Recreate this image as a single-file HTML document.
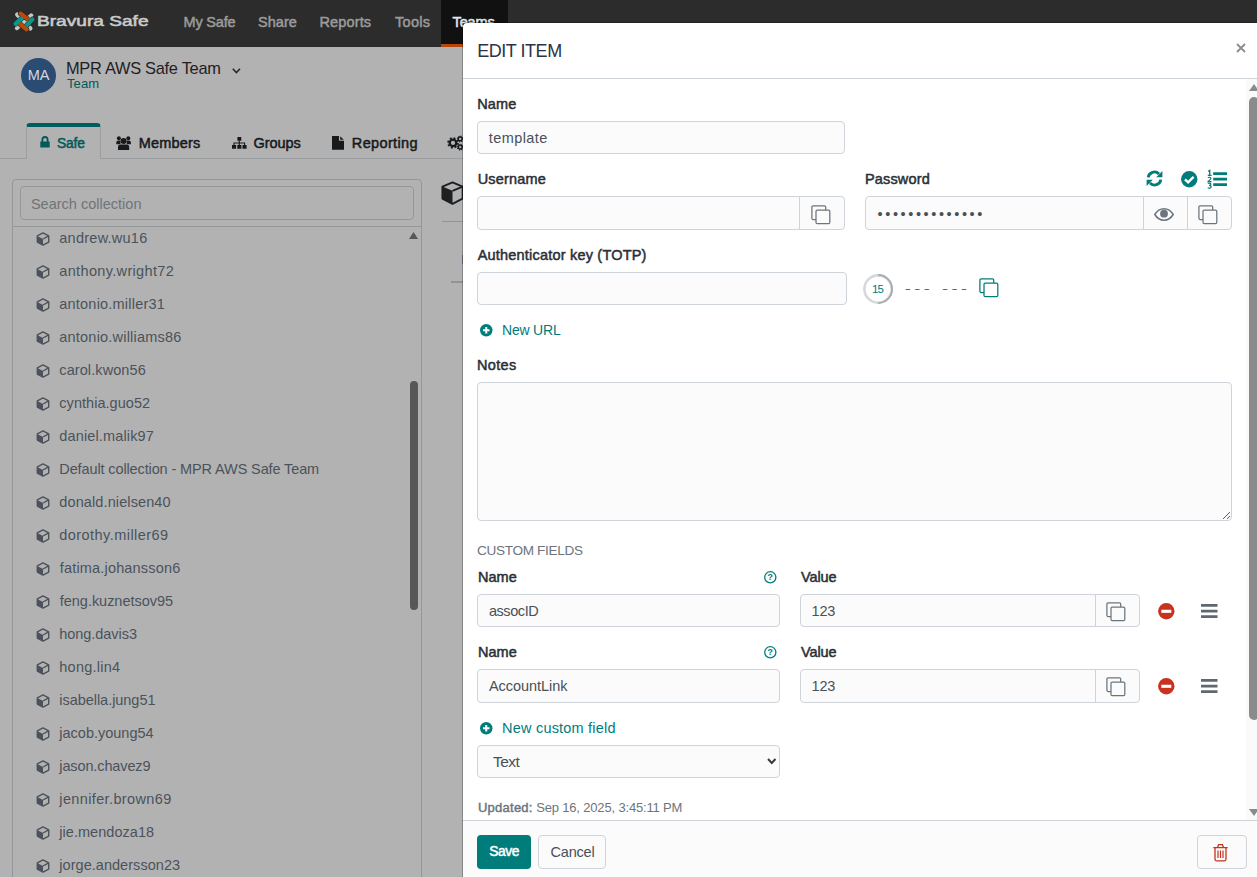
<!DOCTYPE html>
<html lang="en">
<head>
<meta charset="utf-8">
<title>Bravura Safe - Edit Item</title>
<style>
*{box-sizing:border-box;margin:0;padding:0}
html,body{width:1257px;height:877px;overflow:hidden;background:#b2b2b2}
body{position:relative;font-family:"Liberation Sans",sans-serif;font-size:14.5px;color:#171a1d}
.abs{position:absolute}
.t{position:absolute;white-space:nowrap;line-height:1}
svg{display:block;position:absolute;overflow:visible}

/* ---------- dimmed page underneath ---------- */
#nav{position:absolute;left:0;top:0;width:1257px;height:47px;background:#2c2c2c}
#nav .active{position:absolute;left:441px;top:0;width:67px;height:47px;background:#111;border-bottom:3px solid #b6470a}
#nav .lnk{font-weight:normal;-webkit-text-stroke:0.5px currentColor;font-size:14.5px;color:#9b9b9b;top:15px}
#nav .brand{font-weight:normal;-webkit-text-stroke:0.55px currentColor;color:#cacaca;font-size:13.8px;left:37.5px;top:15.300px;transform-origin:0 50%;transform:scaleX(1.385)}

#avatar{left:21px;top:58px;width:35px;height:35px;border-radius:50%;background:#2a4b72;color:#d4d9e0;font-size:14.5px;text-align:center;line-height:35.5px}
#teamname{left:67px;top:60px;font-size:16.4px;color:#231d22}
#teamsub{left:67px;top:77.300px;font-size:13px;color:#00595a}

#tabline{left:0;top:158px;width:463px;height:1px;background:#9a9da0}
#tabsafe{left:26px;top:123px;width:75px;height:36px;border:1px solid #9a9da0;border-bottom:none;border-top:4px solid #005f5e;border-radius:4px 4px 0 0;background:#b2b2b2}
.tab{font-weight:normal;-webkit-text-stroke:0.5px currentColor;font-size:14.5px;color:#171a1d;top:136px}

#coll{left:12px;top:179px;width:410px;height:720px;border:1px solid #94979a;border-radius:4px 4px 0 0}
#collhead{left:12px;top:226px;width:410px;height:1px;background:#94979a}
#search{left:20px;top:186px;width:394px;height:34px;border:1px solid #94979a;border-radius:4px}
#searchph{left:31.5px;top:197px;color:#6f7479;font-size:14.5px}
.row{left:59.5px;color:#4b525b;font-size:14.5px}
.cube{left:35.500px;margin-top:0.600px;width:14px;height:14px;color:#4b525b}
#sthumb{left:409.700px;top:381px;width:8px;height:229px;border-radius:4px;background:#575757}

/* ---------- modal ---------- */
#modal{left:462px;top:22px;width:801px;height:900px;background:#fff;border:1px solid rgba(0,0,0,.25);background-clip:padding-box;border-radius:5px 0 0 0;overflow:hidden}

#mhead-line{left:463px;top:78px;width:800px;height:1px;background:#ced4da}
#mtitle{left:477.5px;top:42px;font-size:18px;color:#2b3345}
#mclose{left:1236px;top:43px;width:10px;height:10px;color:#8c8c8c}
#mfoot{left:463px;top:820px;width:800px;height:60px;background:#fbfbfb;border-top:1px solid #ced4da}
#strack{left:1246px;top:79px;width:16px;height:741px;background:#fafafa}
#sthumb2{left:1249px;top:97px;width:10px;height:623px;border-radius:5px;background:#8b8b8b}
.lbl{font-weight:normal;-webkit-text-stroke:0.5px currentColor;font-size:14.5px;color:#2b2f36;line-height:21px}
.inp{position:absolute;background:#fbfbfb;border:1px solid #ced4da;border-radius:4px}
.inp .div{position:absolute;top:0;bottom:0;width:1px;background:#ced4da}
.val{font-size:14.5px;color:#495057;line-height:21px}
.lnk2{font-size:14.5px;color:#007c7b;line-height:21px}
.ic{color:#5c656e}
.teal{color:#007c7b}
#save{left:477px;top:835px;width:54px;height:34px;border-radius:4px;background:#007c7b}
#savet{left:488px;top:845.200px;font-weight:normal;-webkit-text-stroke:0.5px currentColor;font-size:13.800px;color:#fff}
#cancel{left:538px;top:835px;width:68px;height:34px;border-radius:4px;background:#fbfbfb;border:1px solid #ced4da}
#cancelt{left:550px;top:844.8px;font-size:14.5px;color:#49505a}
#trash{left:1197px;top:835px;width:50px;height:34px;border-radius:4px;background:#fbfbfb;border:1px solid #ced4da}
</style>
</head>
<body>

<div id="nav">
  <div class="active"></div>
  <span class="t brand" id="brand" style="left:36.8px">Bravura Safe</span>
  <span class="t lnk" id="n1" style="left:183.5px;letter-spacing:-0.17px">My Safe</span>
  <span class="t lnk" id="n2" style="left:258.0px;letter-spacing:0.05px">Share</span>
  <span class="t lnk" id="n3" style="left:319.5px;letter-spacing:0.13px">Reports</span>
  <span class="t lnk" id="n4" style="left:395.1px;letter-spacing:0.24px">Tools</span>
  <span class="t lnk" id="n5" style="left:452.5px;color:#e2e6e9;letter-spacing:-0.100px">Teams</span>
</div>

<div class="abs" id="avatar">MA</div>
<span class="t" id="teamname" style="letter-spacing:-0.28px;left:66.0px">MPR AWS Safe Team</span>
<span class="t" id="teamsub" style="letter-spacing:0.10px;left:67.0px">Team</span>

<div class="abs" id="tabline"></div>
<div class="abs" id="tabsafe"></div>
<span class="t tab" id="t1" style="top:136.600px;font-size:13.800px;left:57.0px;color:#005a5a;letter-spacing:-0.17px">Safe</span>
<span class="t tab" id="t2" style="left:138.7px;letter-spacing:0.20px">Members</span>
<span class="t tab" id="t3" style="left:253.5px;letter-spacing:-0.04px">Groups</span>
<span class="t tab" id="t4" style="left:351.8px;letter-spacing:0.36px">Reporting</span>

<div class="abs" id="coll"></div>
<div class="abs" id="collhead"></div>
<div class="abs" id="search"></div>
<span class="t" id="searchph" style="letter-spacing:0.01px;left:30.9px">Search collection</span>
<div id="rows">
<svg class="cube" style="top:231px" viewBox="0 0 14 14"><path d="M7 .9 12.7 3.9V10.1L7 13.1 1.3 10.1V3.9Z" fill="none" stroke="currentColor" stroke-width="1.4" stroke-linejoin="round"/><path d="M1.3 3.9 7 7V13.1L1.3 10.1Z" fill="currentColor"/><path d="M7 7 12.7 3.9" fill="none" stroke="currentColor" stroke-width="1.4"/></svg><span class="t row" id="r0" style="top:231px;letter-spacing:0.25px;left:59.3px">andrew.wu16</span>
<svg class="cube" style="top:264px" viewBox="0 0 14 14"><path d="M7 .9 12.7 3.9V10.1L7 13.1 1.3 10.1V3.9Z" fill="none" stroke="currentColor" stroke-width="1.4" stroke-linejoin="round"/><path d="M1.3 3.9 7 7V13.1L1.3 10.1Z" fill="currentColor"/><path d="M7 7 12.7 3.9" fill="none" stroke="currentColor" stroke-width="1.4"/></svg><span class="t row" id="r1" style="top:264px;letter-spacing:0.34px;left:59.3px">anthony.wright72</span>
<svg class="cube" style="top:297px" viewBox="0 0 14 14"><path d="M7 .9 12.7 3.9V10.1L7 13.1 1.3 10.1V3.9Z" fill="none" stroke="currentColor" stroke-width="1.4" stroke-linejoin="round"/><path d="M1.3 3.9 7 7V13.1L1.3 10.1Z" fill="currentColor"/><path d="M7 7 12.7 3.9" fill="none" stroke="currentColor" stroke-width="1.4"/></svg><span class="t row" id="r2" style="top:297px;letter-spacing:0.21px;left:59.3px">antonio.miller31</span>
<svg class="cube" style="top:330px" viewBox="0 0 14 14"><path d="M7 .9 12.7 3.9V10.1L7 13.1 1.3 10.1V3.9Z" fill="none" stroke="currentColor" stroke-width="1.4" stroke-linejoin="round"/><path d="M1.3 3.9 7 7V13.1L1.3 10.1Z" fill="currentColor"/><path d="M7 7 12.7 3.9" fill="none" stroke="currentColor" stroke-width="1.4"/></svg><span class="t row" id="r3" style="top:330px;letter-spacing:0.21px;left:59.3px">antonio.williams86</span>
<svg class="cube" style="top:363px" viewBox="0 0 14 14"><path d="M7 .9 12.7 3.9V10.1L7 13.1 1.3 10.1V3.9Z" fill="none" stroke="currentColor" stroke-width="1.4" stroke-linejoin="round"/><path d="M1.3 3.9 7 7V13.1L1.3 10.1Z" fill="currentColor"/><path d="M7 7 12.7 3.9" fill="none" stroke="currentColor" stroke-width="1.4"/></svg><span class="t row" id="r4" style="top:363px;letter-spacing:0.09px;left:59.3px">carol.kwon56</span>
<svg class="cube" style="top:396px" viewBox="0 0 14 14"><path d="M7 .9 12.7 3.9V10.1L7 13.1 1.3 10.1V3.9Z" fill="none" stroke="currentColor" stroke-width="1.4" stroke-linejoin="round"/><path d="M1.3 3.9 7 7V13.1L1.3 10.1Z" fill="currentColor"/><path d="M7 7 12.7 3.9" fill="none" stroke="currentColor" stroke-width="1.4"/></svg><span class="t row" id="r5" style="top:396px;letter-spacing:0.04px;left:59.3px">cynthia.guo52</span>
<svg class="cube" style="top:429px" viewBox="0 0 14 14"><path d="M7 .9 12.7 3.9V10.1L7 13.1 1.3 10.1V3.9Z" fill="none" stroke="currentColor" stroke-width="1.4" stroke-linejoin="round"/><path d="M1.3 3.9 7 7V13.1L1.3 10.1Z" fill="currentColor"/><path d="M7 7 12.7 3.9" fill="none" stroke="currentColor" stroke-width="1.4"/></svg><span class="t row" id="r6" style="top:429px;letter-spacing:0.14px;left:59.3px">daniel.malik97</span>
<svg class="cube" style="top:462px" viewBox="0 0 14 14"><path d="M7 .9 12.7 3.9V10.1L7 13.1 1.3 10.1V3.9Z" fill="none" stroke="currentColor" stroke-width="1.4" stroke-linejoin="round"/><path d="M1.3 3.9 7 7V13.1L1.3 10.1Z" fill="currentColor"/><path d="M7 7 12.7 3.9" fill="none" stroke="currentColor" stroke-width="1.4"/></svg><span class="t row" id="r7" style="top:462px;letter-spacing:-0.12px;left:59.3px">Default collection - MPR AWS Safe Team</span>
<svg class="cube" style="top:495px" viewBox="0 0 14 14"><path d="M7 .9 12.7 3.9V10.1L7 13.1 1.3 10.1V3.9Z" fill="none" stroke="currentColor" stroke-width="1.4" stroke-linejoin="round"/><path d="M1.3 3.9 7 7V13.1L1.3 10.1Z" fill="currentColor"/><path d="M7 7 12.7 3.9" fill="none" stroke="currentColor" stroke-width="1.4"/></svg><span class="t row" id="r8" style="top:495px;letter-spacing:0.11px;left:59.3px">donald.nielsen40</span>
<svg class="cube" style="top:528px" viewBox="0 0 14 14"><path d="M7 .9 12.7 3.9V10.1L7 13.1 1.3 10.1V3.9Z" fill="none" stroke="currentColor" stroke-width="1.4" stroke-linejoin="round"/><path d="M1.3 3.9 7 7V13.1L1.3 10.1Z" fill="currentColor"/><path d="M7 7 12.7 3.9" fill="none" stroke="currentColor" stroke-width="1.4"/></svg><span class="t row" id="r9" style="top:528px;letter-spacing:0.45px;left:59.3px">dorothy.miller69</span>
<svg class="cube" style="top:561px" viewBox="0 0 14 14"><path d="M7 .9 12.7 3.9V10.1L7 13.1 1.3 10.1V3.9Z" fill="none" stroke="currentColor" stroke-width="1.4" stroke-linejoin="round"/><path d="M1.3 3.9 7 7V13.1L1.3 10.1Z" fill="currentColor"/><path d="M7 7 12.7 3.9" fill="none" stroke="currentColor" stroke-width="1.4"/></svg><span class="t row" id="r10" style="top:561px;letter-spacing:0.17px;left:59.8px">fatima.johansson6</span>
<svg class="cube" style="top:594px" viewBox="0 0 14 14"><path d="M7 .9 12.7 3.9V10.1L7 13.1 1.3 10.1V3.9Z" fill="none" stroke="currentColor" stroke-width="1.4" stroke-linejoin="round"/><path d="M1.3 3.9 7 7V13.1L1.3 10.1Z" fill="currentColor"/><path d="M7 7 12.7 3.9" fill="none" stroke="currentColor" stroke-width="1.4"/></svg><span class="t row" id="r11" style="top:594px;letter-spacing:-0.03px;left:59.8px">feng.kuznetsov95</span>
<svg class="cube" style="top:627px" viewBox="0 0 14 14"><path d="M7 .9 12.7 3.9V10.1L7 13.1 1.3 10.1V3.9Z" fill="none" stroke="currentColor" stroke-width="1.4" stroke-linejoin="round"/><path d="M1.3 3.9 7 7V13.1L1.3 10.1Z" fill="currentColor"/><path d="M7 7 12.7 3.9" fill="none" stroke="currentColor" stroke-width="1.4"/></svg><span class="t row" id="r12" style="top:627px;letter-spacing:-0.05px;left:59.3px">hong.davis3</span>
<svg class="cube" style="top:660px" viewBox="0 0 14 14"><path d="M7 .9 12.7 3.9V10.1L7 13.1 1.3 10.1V3.9Z" fill="none" stroke="currentColor" stroke-width="1.4" stroke-linejoin="round"/><path d="M1.3 3.9 7 7V13.1L1.3 10.1Z" fill="currentColor"/><path d="M7 7 12.7 3.9" fill="none" stroke="currentColor" stroke-width="1.4"/></svg><span class="t row" id="r13" style="top:660px;letter-spacing:0.24px;left:59.3px">hong.lin4</span>
<svg class="cube" style="top:693px" viewBox="0 0 14 14"><path d="M7 .9 12.7 3.9V10.1L7 13.1 1.3 10.1V3.9Z" fill="none" stroke="currentColor" stroke-width="1.4" stroke-linejoin="round"/><path d="M1.3 3.9 7 7V13.1L1.3 10.1Z" fill="currentColor"/><path d="M7 7 12.7 3.9" fill="none" stroke="currentColor" stroke-width="1.4"/></svg><span class="t row" id="r14" style="top:693px;letter-spacing:-0.04px;left:59.3px">isabella.jung51</span>
<svg class="cube" style="top:726px" viewBox="0 0 14 14"><path d="M7 .9 12.7 3.9V10.1L7 13.1 1.3 10.1V3.9Z" fill="none" stroke="currentColor" stroke-width="1.4" stroke-linejoin="round"/><path d="M1.3 3.9 7 7V13.1L1.3 10.1Z" fill="currentColor"/><path d="M7 7 12.7 3.9" fill="none" stroke="currentColor" stroke-width="1.4"/></svg><span class="t row" id="r15" style="top:726px;letter-spacing:0.00px;left:59.3px">jacob.young54</span>
<svg class="cube" style="top:759px" viewBox="0 0 14 14"><path d="M7 .9 12.7 3.9V10.1L7 13.1 1.3 10.1V3.9Z" fill="none" stroke="currentColor" stroke-width="1.4" stroke-linejoin="round"/><path d="M1.3 3.9 7 7V13.1L1.3 10.1Z" fill="currentColor"/><path d="M7 7 12.7 3.9" fill="none" stroke="currentColor" stroke-width="1.4"/></svg><span class="t row" id="r16" style="top:759px;letter-spacing:-0.12px;left:59.3px">jason.chavez9</span>
<svg class="cube" style="top:792px" viewBox="0 0 14 14"><path d="M7 .9 12.7 3.9V10.1L7 13.1 1.3 10.1V3.9Z" fill="none" stroke="currentColor" stroke-width="1.4" stroke-linejoin="round"/><path d="M1.3 3.9 7 7V13.1L1.3 10.1Z" fill="currentColor"/><path d="M7 7 12.7 3.9" fill="none" stroke="currentColor" stroke-width="1.4"/></svg><span class="t row" id="r17" style="top:792px;letter-spacing:0.37px;left:59.3px">jennifer.brown69</span>
<svg class="cube" style="top:825px" viewBox="0 0 14 14"><path d="M7 .9 12.7 3.9V10.1L7 13.1 1.3 10.1V3.9Z" fill="none" stroke="currentColor" stroke-width="1.4" stroke-linejoin="round"/><path d="M1.3 3.9 7 7V13.1L1.3 10.1Z" fill="currentColor"/><path d="M7 7 12.7 3.9" fill="none" stroke="currentColor" stroke-width="1.4"/></svg><span class="t row" id="r18" style="top:825px;letter-spacing:0.04px;left:59.3px">jie.mendoza18</span>
<svg class="cube" style="top:858px" viewBox="0 0 14 14"><path d="M7 .9 12.7 3.9V10.1L7 13.1 1.3 10.1V3.9Z" fill="none" stroke="currentColor" stroke-width="1.4" stroke-linejoin="round"/><path d="M1.3 3.9 7 7V13.1L1.3 10.1Z" fill="currentColor"/><path d="M7 7 12.7 3.9" fill="none" stroke="currentColor" stroke-width="1.4"/></svg><span class="t row" id="r19" style="top:858px;letter-spacing:0.04px;left:59.3px">jorge.andersson23</span>
</div>
<div class="abs" id="sthumb"></div>


<svg id="logo" style="left:0;top:0;width:60px;height:47px" viewBox="0 0 60 47">
 <g fill="none" stroke-linecap="round">
  <path d="M17.200 14.500 30.400 28.500" stroke="#c6c6c6" stroke-width="4.300"/>
  <path d="M17 28 31.200 15.500" stroke="#c6c6c6" stroke-width="4.300"/>
 </g>
 <g fill="none" stroke-linecap="round">
  <path d="M15.6 23.9 21.2 18.8" stroke="#2c2c2c" stroke-width="5.300"/>
  <path d="M27.4 24.6 32.4 19.4" stroke="#2c2c2c" stroke-width="5.300"/>
  <path d="M20.6 13.6 26.8 18.4" stroke="#2c2c2c" stroke-width="5.300"/>
  <path d="M20.6 24.6 26.6 29.3" stroke="#2c2c2c" stroke-width="5.300"/>
  <path d="M15.6 23.9 21.6 18.4" stroke="#009a90" stroke-width="4.2"/>
  <path d="M27.2 24.8 32.4 19.4" stroke="#009a90" stroke-width="4.2"/>
  <path d="M20.6 13.6 27.2 18.7" stroke="#bb4a08" stroke-width="4.2"/>
  <path d="M20.4 24.4 26.6 29.3" stroke="#bb4a08" stroke-width="4.2"/>
 </g>
</svg>
<svg id="chev" style="left:232px;top:68px;width:9px;height:6px" viewBox="0 0 9 6"><path d="M.8 .8 4.4 4.6 8 .8" fill="none" stroke="#22262b" stroke-width="1.5"/></svg>
<svg id="i-lock" style="left:40px;top:136.100px;width:10px;height:12px;color:#005a5a" viewBox="0 0 10 12"><path d="M0.3 5.5h9.4v6H0.3z" fill="currentColor"/><path d="M2.4 6V3.6a2.6 2.6 0 0 1 5.2 0V6" fill="none" stroke="currentColor" stroke-width="1.8"/></svg>
<svg id="i-users" style="left:115.600px;top:135.900px;width:15.200px;height:14px;color:#171a1d" viewBox="0 0 15.200 14"><circle cx="2.900" cy="2.300" r="2" fill="currentColor"/><circle cx="12.300" cy="2.300" r="2" fill="currentColor"/><path d="M0.300 8.200V6.600a2 2 0 0 1 2-2h2.200v3.600zM14.900 8.200V6.600a2 2 0 0 0-2-2h-2.200v3.600z" fill="currentColor"/><circle cx="7.600" cy="5" r="3" fill="currentColor"/><path d="M2 13.900v-2.800a2.700 2.700 0 0 1 2.700-2.700h5.800a2.700 2.700 0 0 1 2.700 2.700v2.800z" fill="currentColor"/></svg>
<svg id="i-site" style="left:231.7px;top:137px;width:14.6px;height:11.8px;color:#171a1d" viewBox="0 0 14.6 11.8"><path d="M5.4 0h3.9v3.8H5.4zM0 8h4.1v3.8H0zM5.3 8h4.1v3.8H5.3zM10.5 8h4.1v3.8h-4.1z" fill="currentColor"/><path d="M7.3 3.5V8M2 8V6h10.6v2" fill="none" stroke="currentColor" stroke-width="1.1"/></svg>
<svg id="i-file" style="left:332px;top:136px;width:12px;height:13.7px;color:#171a1d" viewBox="0 0 12 13.7"><path d="M0 0h7v4.8h5v8.9H0z" fill="currentColor"/><path d="M8.2 0.2 11.8 3.7H8.2z" fill="currentColor"/></svg>
<svg id="i-cogs" style="left:447px;top:135px;width:17px;height:16px;color:#171a1d" viewBox="0 0 17 16"><g fill="none" stroke="currentColor"><circle cx="6" cy="7.900" r="3.300" stroke-width="2.300"/><circle cx="6" cy="7.900" r="4.900" stroke-width="1.700" stroke-dasharray="1.900 1.950"/><circle cx="13.200" cy="3.900" r="1.900" stroke-width="1.400"/><circle cx="13.200" cy="3.900" r="2.800" stroke-width="1.100" stroke-dasharray="1.100 1.100"/><circle cx="13.200" cy="12.100" r="1.900" stroke-width="1.400"/><circle cx="13.200" cy="12.100" r="2.800" stroke-width="1.100" stroke-dasharray="1.100 1.100"/></g></svg>
<svg id="i-bigcube" style="left:441px;top:181px;width:23px;height:24px;color:#1d1f22" viewBox="0 0 23 24"><path d="M11.5 1.4 21.6 5.6V17.6L11.5 22.8 1.4 17.6V5.6Z" fill="none" stroke="currentColor" stroke-width="1.9" stroke-linejoin="round"/><path d="M1.4 5.6 11.5 9.8V22.8L1.4 17.6Z" fill="currentColor"/><path d="M11.5 9.8 21.6 5.6" fill="none" stroke="currentColor" stroke-width="1.9"/></svg>
<div class="abs" style="left:442px;top:221px;width:30px;height:1px;background:#8e9499"></div>
<div class="abs" style="left:451px;top:281px;width:20px;height:2px;background:#8e9499"></div>
<svg style="left:409px;top:232px;width:9px;height:7px" viewBox="0 0 9 7"><path d="M0 7 4.5 0 9 7Z" fill="#575757"/></svg>
<div class="abs" style="left:462px;top:254.500px;width:1px;height:9px;background:#6f7a88"></div>
<div class="abs" id="modal"></div>

<div class="abs" id="mhead-line"></div>
<span class="t" id="mtitle" style="letter-spacing:-0.48px;left:477.3px">EDIT ITEM</span>
<svg id="mclose" viewBox="0 0 10 10"><path d="M1 1 9 9M9 1 1 9" stroke="currentColor" stroke-width="1.8" fill="none"/></svg>
<div class="abs" id="strack"></div>
<svg style="left:1249px;top:84px;width:10px;height:7px" viewBox="0 0 10 7"><path d="M0 7 5 0 10 7Z" fill="#8b8b8b"/></svg>
<div class="abs" id="sthumb2"></div>
<svg style="left:1249px;top:809px;width:10px;height:7px" viewBox="0 0 10 7"><path d="M0 0 5 7 10 0Z" fill="#8b8b8b"/></svg>

<span class="t lbl" id="l-name" style="left:477.3px;top:93.5px;letter-spacing:0.10px">Name</span>
<div class="inp" style="left:477px;top:121px;width:368px;height:33px"></div>
<span class="t val" id="v-name" style="left:488.7px;top:128px;letter-spacing:0.43px">template</span>

<span class="t lbl" id="l-user" style="left:477.7px;top:168.5px;letter-spacing:0.18px">Username</span>
<div class="inp" style="left:477px;top:196px;width:368px;height:34px"><div class="div" style="left:321px"></div></div>

<span class="t lbl" id="l-pass" style="left:864.9px;top:168.5px;letter-spacing:0.18px">Password</span>
<div class="inp" style="left:865px;top:196px;width:367px;height:34px"><div class="div" style="left:277px"></div><div class="div" style="left:321px"></div></div>
<span class="t val" id="v-pass" style="left:877.6px;top:203.5px;letter-spacing:2.59px">&#8226;&#8226;&#8226;&#8226;&#8226;&#8226;&#8226;&#8226;&#8226;&#8226;&#8226;&#8226;&#8226;&#8226;</span>

<span class="t lbl" id="l-totp" style="left:477.7px;top:244.5px;letter-spacing:0.20px">Authenticator key (TOTP)</span>
<div class="inp" style="left:477px;top:272px;width:370px;height:33px"></div>
<svg id="totpc" style="left:863px;top:274px;width:30px;height:30px" viewBox="0 0 30 30"><circle cx="15" cy="15" r="13.6" fill="none" stroke="#d6d9db" stroke-width="2.6"/><path d="M15 0.900A14.100 14.100 0 0 1 15 29.100" fill="none" stroke="#a7abae" stroke-width="1.800"/></svg>
<span class="t teal" id="v-15" style="left:872.0px;top:283.7px;font-size:11.5px;letter-spacing:-0.80px">15</span>
<span class="t teal" id="v-dash" style="left:904.8px;top:278.800px;font-size:18px;letter-spacing:3.53px;transform:scaleY(0.650)">--- ---</span>

<span class="t lnk2" id="l-newurl" style="font-size:14px;left:502.0px;top:319.5px;letter-spacing:-0.20px">New URL</span>

<span class="t lbl" id="l-notes" style="left:477.0px;top:354.5px;letter-spacing:0.34px">Notes</span>
<div class="inp" style="left:477px;top:382px;width:755px;height:139px"></div>
<svg style="left:1222px;top:511px;width:9px;height:9px" viewBox="0 0 9 9"><path d="M1.300 7.700 7.800 1.300M5.400 7.700 7.800 5.300" fill="none" stroke="#5a5a5a" stroke-width="1" stroke-linecap="round"/></svg>

<span class="t" id="l-cf" style="left:477.0px;top:540px;font-size:13.6px;line-height:21px;color:#6c757d;letter-spacing:-0.33px">CUSTOM FIELDS</span>

<span class="t lbl" id="l-cn1" style="left:477.9px;top:567px;letter-spacing:0.07px">Name</span>
<svg style="left:764.300px;top:570.7px;width:12.600px;height:12.600px" viewBox="0 0 12.600 12.600"><circle cx="6.300" cy="6.300" r="5.600" fill="none" stroke="#007c7b" stroke-width="1.300"/><text x="6.300" y="9.400" text-anchor="middle" font-family="Liberation Sans, sans-serif" font-weight="bold" font-size="8.800" fill="#007c7b">?</text></svg>
<span class="t lbl" id="l-cv1" style="left:801.0px;top:567px;letter-spacing:-0.10px">Value</span>
<div class="inp" style="left:477px;top:594px;width:303px;height:33px"></div>
<span class="t val" id="v-cn1" style="left:488.9px;top:600.8px;letter-spacing:-0.42px">assocID</span>
<div class="inp" style="left:800px;top:594px;width:340px;height:33px"><div class="div" style="left:294px"></div></div>
<span class="t val" id="v-cv1" style="left:811.6px;top:600.8px;letter-spacing:-0.20px">123</span>

<span class="t lbl" id="l-cn2" style="left:477.9px;top:641.7px;letter-spacing:0.07px">Name</span>
<svg style="left:764.300px;top:645.7px;width:12.600px;height:12.600px" viewBox="0 0 12.600 12.600"><circle cx="6.300" cy="6.300" r="5.600" fill="none" stroke="#007c7b" stroke-width="1.300"/><text x="6.300" y="9.400" text-anchor="middle" font-family="Liberation Sans, sans-serif" font-weight="bold" font-size="8.800" fill="#007c7b">?</text></svg>
<span class="t lbl" id="l-cv2" style="left:801.0px;top:641.7px;letter-spacing:-0.10px">Value</span>
<div class="inp" style="left:477px;top:669px;width:303px;height:34px"></div>
<span class="t val" id="v-cn2" style="left:488.9px;top:675.8px;letter-spacing:-0.03px">AccountLink</span>
<div class="inp" style="left:800px;top:669px;width:340px;height:34px"><div class="div" style="left:294px"></div></div>
<span class="t val" id="v-cv2" style="left:811.6px;top:675.8px;letter-spacing:-0.20px">123</span>

<span class="t lnk2" id="l-newcf" style="left:502.1px;top:717.5px;letter-spacing:0.20px">New custom field</span>
<div class="inp" style="left:477px;top:745px;width:303px;height:33px"></div>
<span class="t val" id="v-sel" style="left:492.9px;top:751px;font-size:15.5px;color:#495057;letter-spacing:-0.47px">Text</span>

<span class="t" id="l-upd" style="left:477.9px;top:801px;font-size:13px;color:#6c757d;-webkit-text-stroke:0.45px currentColor;letter-spacing:0.26px">Updated:</span>
<span class="t" id="l-upd2" style="left:536.2px;top:801px;font-size:13px;color:#6c757d;letter-spacing:-0.17px">Sep 16, 2025, 3:45:11 PM</span>

<svg style="left:810.5px;top:204.5px;width:20px;height:20px;color:#6c757d" viewBox="0 0 20 20"><rect x="0.9" y="0.9" width="13.8" height="13.6" rx="1.2" fill="none" stroke="currentColor" stroke-width="1.250"/><rect x="5" y="5.1" width="13.8" height="13.6" rx="1.2" fill="#fbfbfb" stroke="currentColor" stroke-width="1.250"/></svg>
<svg style="left:1198px;top:204.5px;width:20px;height:20px;color:#6c757d" viewBox="0 0 20 20"><rect x="0.9" y="0.9" width="13.8" height="13.6" rx="1.2" fill="none" stroke="currentColor" stroke-width="1.250"/><rect x="5" y="5.1" width="13.8" height="13.6" rx="1.2" fill="#fbfbfb" stroke="currentColor" stroke-width="1.250"/></svg>
<svg style="left:1106px;top:601.5px;width:20px;height:20px;color:#6c757d" viewBox="0 0 20 20"><rect x="0.9" y="0.9" width="13.8" height="13.6" rx="1.2" fill="none" stroke="currentColor" stroke-width="1.250"/><rect x="5" y="5.1" width="13.8" height="13.6" rx="1.2" fill="#fbfbfb" stroke="currentColor" stroke-width="1.250"/></svg>
<svg style="left:1106px;top:676.5px;width:20px;height:20px;color:#6c757d" viewBox="0 0 20 20"><rect x="0.9" y="0.9" width="13.8" height="13.6" rx="1.2" fill="none" stroke="currentColor" stroke-width="1.250"/><rect x="5" y="5.1" width="13.8" height="13.6" rx="1.2" fill="#fbfbfb" stroke="currentColor" stroke-width="1.250"/></svg>
<svg style="left:978.5px;top:277.5px;width:20px;height:20px;color:#007c7b" viewBox="0 0 20 20"><rect x="0.9" y="0.9" width="13.8" height="13.6" rx="1.2" fill="none" stroke="currentColor" stroke-width="1.250"/><rect x="5" y="5.1" width="13.8" height="13.6" rx="1.2" fill="#fff" stroke="currentColor" stroke-width="1.250"/></svg>
<svg id="i-eye" style="left:1154px;top:208px;width:20px;height:13px;color:#6c757d" viewBox="0 0 20 13"><path d="M0.8 6.5C3.2 2.6 6.4 0.8 10 0.8s6.800 1.800 9.200 5.700C16.800 10.400 13.600 12.200 10 12.200S3.200 10.400 0.800 6.500Z" fill="none" stroke="currentColor" stroke-width="1.5"/><circle cx="10" cy="5.700" r="3.900" fill="currentColor"/></svg>
<svg id="i-refresh" style="left:1146.300px;top:170.400px;width:17px;height:17px;color:#007c7b" viewBox="0 0 17 17"><path d="M2.200 7.400A6.300 6.300 0 0 1 13 3.900" fill="none" stroke="currentColor" stroke-width="2.900"/><path d="M16.400 1V7.200h-6.200z" fill="currentColor"/><path d="M14.800 9.600A6.300 6.300 0 0 1 4 13.100" fill="none" stroke="currentColor" stroke-width="2.900"/><path d="M0.600 16V9.800h6.200z" fill="currentColor"/></svg>
<svg id="i-check" style="left:1181px;top:171px;width:16.500px;height:16.500px" viewBox="0 0 16.500 16.500"><circle cx="8.250" cy="8.250" r="8.200" fill="#007c7b"/><path d="M4 8.400 7.100 11.400 12.600 5.800" fill="none" stroke="#fff" stroke-width="2.400"/></svg>
<svg id="i-listol" style="left:1207px;top:170px;width:20px;height:19px;color:#007c7b" viewBox="0 0 20 19"><path d="M6.200 2.300H20V5.100H6.200zM6.200 7.800H20v2.800H6.200zM6.200 13.200H20V16H6.200z" fill="currentColor"/><path d="M1.200 1.400 2.700 0.500V5.400M0.800 5.400H4.600" fill="none" stroke="currentColor" stroke-width="1.300"/><path d="M0.900 7.900C1.800 6.900 3.900 7 3.900 8.400 3.900 9.600 1.700 10.300 0.900 11.700H4.500" fill="none" stroke="currentColor" stroke-width="1.200"/><path d="M0.900 13.600C1.800 12.800 3.900 13 3.900 14.200 3.900 15.200 2.700 15.400 2 15.400 2.800 15.400 4.200 15.600 4.200 16.800 4.200 18.300 1.700 18.500 0.700 17.600" fill="none" stroke="currentColor" stroke-width="1.200"/></svg>
<svg style="left:479.800px;top:323.800px;width:12.500px;height:12.500px" viewBox="0 0 12.500 12.500"><circle cx="6.250" cy="6.250" r="6.200" fill="#007c7b"/><path d="M6.250 3V9.500M3 6.250H9.500" stroke="#fff" stroke-width="2" fill="none"/></svg>
<svg style="left:479.800px;top:721.800px;width:12.500px;height:12.500px" viewBox="0 0 12.500 12.500"><circle cx="6.250" cy="6.250" r="6.200" fill="#007c7b"/><path d="M6.250 3V9.500M3 6.250H9.500" stroke="#fff" stroke-width="2" fill="none"/></svg>
<svg style="left:1158.400px;top:602.800px;width:16.600px;height:16.600px" viewBox="0 0 16.600 16.600"><circle cx="8.300" cy="8.300" r="8.200" fill="#c8321f"/><path d="M3.300 8.300H13.300" stroke="#fff" stroke-width="3.100" fill="none"/></svg>
<svg style="left:1158.400px;top:677.800px;width:16.600px;height:16.600px" viewBox="0 0 16.600 16.600"><circle cx="8.300" cy="8.300" r="8.200" fill="#c8321f"/><path d="M3.300 8.300H13.300" stroke="#fff" stroke-width="3.100" fill="none"/></svg>
<svg style="left:1201px;top:604px;width:16.500px;height:14px" viewBox="0 0 16.500 14"><path d="M0 1.400H16.500M0 7.100H16.500M0 12.700H16.500" stroke="#5f6870" stroke-width="2.700" fill="none"/></svg>
<svg style="left:1201px;top:679px;width:16.500px;height:14px" viewBox="0 0 16.500 14"><path d="M0 1.400H16.500M0 7.100H16.500M0 12.700H16.500" stroke="#5f6870" stroke-width="2.700" fill="none"/></svg>
<svg style="left:766.500px;top:758px;width:9.500px;height:7px" viewBox="0 0 9.500 7"><path d="M1 1 4.750 5 8.500 1" fill="none" stroke="#343a40" stroke-width="2"/></svg>

<div class="abs" id="mfoot"></div>
<div class="abs" id="save"></div><span class="t" id="savet" style="letter-spacing:-0.40px;left:489.2px">Save</span>
<div class="abs" id="cancel"></div><span class="t" id="cancelt" style="letter-spacing:-0.20px;left:550.5px">Cancel</span>
<div class="abs" id="trash"></div>
<svg id="i-trash" style="left:1213px;top:843.500px;width:15px;height:17.500px;color:#c8321f" viewBox="0 0 15 17.500"><path d="M0.300 3.600H14.700M4.500 3.400 5.600 0.700H9.400L10.500 3.400" fill="none" stroke="currentColor" stroke-width="1.300"/><path d="M2 3.800V15.300a1.500 1.500 0 0 0 1.500 1.500H11.500a1.500 1.500 0 0 0 1.500-1.500V3.800" fill="none" stroke="currentColor" stroke-width="1.300"/><path d="M5 6.500V14M7.500 6.500V14M10 6.500V14" fill="none" stroke="currentColor" stroke-width="1.200"/></svg>


</body>
</html>
